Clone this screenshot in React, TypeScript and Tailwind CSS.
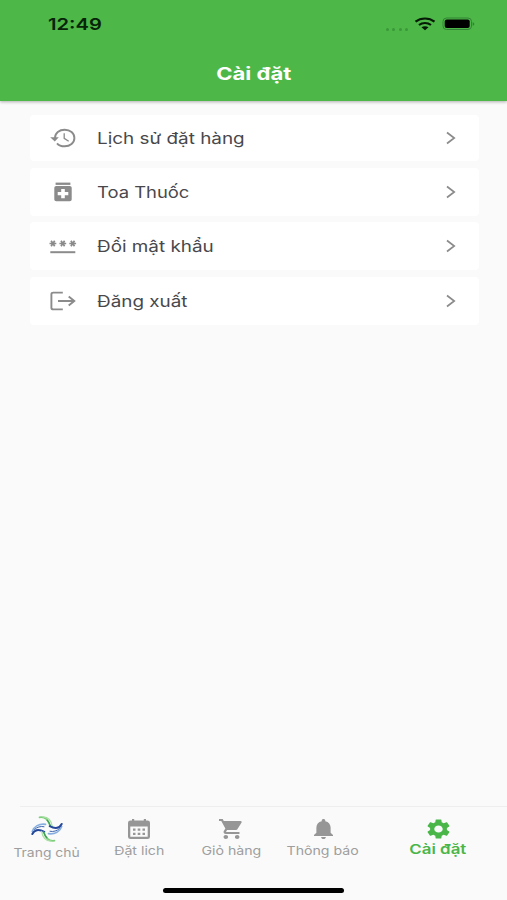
import type { ReactNode } from 'react';

const HistoryIcon = () => (
  <svg width="26" height="20" viewBox="0 0 26 20" fill="none" stroke="#8b8b8b" strokeWidth="1.9">
    <path d="M5 10.500V10C5 5 9.200 1.700 14.700 1.700S24.400 5.300 24.400 10s-4.300 8.300-9.700 8.300c-3.200 0-6-1-7.700-3" />
    <path d="M.2 9.200h8.600L4.800 13.400z" fill="#8b8b8b" stroke="none" />
    <path d="M14.200 5.300v5l4.500 3" strokeWidth="1.300" />
  </svg>
);
const MedicineIcon = () => (
  <svg width="26" height="20" viewBox="0 0 26 20" fill="#8b8b8b">
    <rect x="5.600" y=".6" width="14.800" height="2.300" />
    <path fillRule="evenodd" d="M6.300 3.900h13.400q2 0 2 1.800v11.700q0 1.800-2 1.800H6.300q-2 0-2-1.800V5.700q0-1.800 2-1.800zM11.200 7v3H7.700v3.200h3.500v3h3.600v-3h3.500V10h-3.500V7z" />
  </svg>
);
const PasswordIcon = () => (
  <svg className="-ml-[2px]" width="29" height="20" viewBox="0 0 29 20" stroke="#8b8b8b" fill="none">
    <path d="M2.300 16.200h25" strokeWidth="2" />
    {[4.9, 14.8, 24.7].map((x) => (
      <path key={x} strokeWidth="1.700" d={`M${x - 3.4} 7.500h6.800M${x - 1.8} 4.700l3.600 5.600M${x + 1.8} 4.700l-3.600 5.600`} />
    ))}
  </svg>
);
const LogoutIcon = () => (
  <svg width="26" height="20" viewBox="0 0 26 20" fill="none" stroke="#8b8b8b" strokeWidth="1.900">
    <path d="M12.800 1.600H3.300q-1.900 0-1.900 1.700v13.400q0 1.700 1.900 1.700h9.500M8 10h16M18.700 5.400l5.600 4.600-5.600 4.600" />
  </svg>
);

const Chevron = () => (
  <svg width="10" height="14" viewBox="0 0 10 14" fill="none" stroke="#8b8b8b" strokeWidth="1.700">
    <path d="M1 1.500 8.200 7 1 12.500" />
  </svg>
);

// One half of the pinwheel; the other half is the same shape turned by 180 degrees.
const LogoStrands = () => (
  <g>
    <path d="M9.500 2.300c5-.8 8.500 2.200 10.300 7.700" stroke="#7fce7c" strokeWidth="1.700" />
    <path d="M13 1.800c5.500.3 8.500 4.200 9.300 9.700" stroke="#a9dfa5" strokeWidth="1.300" />
    <path d="M17.200 5.300c1.600 1.500 2.600 3.600 3.300 5.800" stroke="#3f9f58" strokeWidth="1.400" />
    <path d="M2.300 16.500C4 11.500 9 8.500 15.500 9.300" stroke="#86afe0" strokeWidth="1.700" />
    <path d="M2.300 19c2.200-4 6-5.500 12-2.200" stroke="#23479a" strokeWidth="2" />
    <path d="M4.500 14.500C7 12 10.500 11 14 11.700" stroke="#3d64ae" strokeWidth="1" />
  </g>
);
const LogoIcon = () => (
  <svg width="34" height="28" viewBox="0 0 34 28" fill="none" strokeLinecap="round">
    <LogoStrands />
    <g transform="rotate(180 17 14)">
      <LogoStrands />
    </g>
  </svg>
);
const CalendarIcon = () => (
  <svg width="22" height="20" viewBox="0 0 22 20" fill="#969696">
    <path fillRule="evenodd" d="M2.500 1.500H4V0h2.200v1.500h9.600V0H18v1.500h1.500Q22 1.500 22 3.700v14.100Q22 20 19.500 20h-17Q0 20 0 17.800V3.700Q0 1.500 2.500 1.500zM2.300 7.500v10.200h17.400V7.500z" />
    <path d="M5 9.500h2.500v2.200H5zM9.700 9.500h2.600v2.200H9.700zM14.500 9.500H17v2.200h-2.500zM5 13.700h2.500v2.200H5zM9.700 13.700h2.600v2.200H9.700zM14.500 13.700H17v2.200h-2.500z" />
  </svg>
);
const CartIcon = () => (
  <svg width="25" height="20" viewBox="1 2 22 20" preserveAspectRatio="none" fill="#969696">
    <path d="M7 18c-1.100 0-1.990.9-1.990 2S5.900 22 7 22s2-.9 2-2-.9-2-2-2zM1 2v2h2l3.600 7.590-1.350 2.450c-.16.280-.25.610-.25.960 0 1.100.9 2 2 2h12v-2H7.420c-.14 0-.25-.11-.25-.25l.03-.12.9-1.630h7.450c.75 0 1.410-.41 1.750-1.030l3.580-6.490A1 1 0 0 0 20 4H5.210l-.94-2H1zm16 16c-1.100 0-1.990.9-1.990 2s.89 2 1.990 2 2-.9 2-2-.9-2-2-2z" />
  </svg>
);
const BellIcon = () => (
  <svg width="19" height="20" viewBox="4 2.500 16 19.500" preserveAspectRatio="none" fill="#969696">
    <path d="M12 22c1.100 0 2-.9 2-2h-4c0 1.100.89 2 2 2zm6-6v-5c0-3.070-1.640-5.640-4.500-6.320V4c0-.83-.67-1.500-1.500-1.500s-1.500.67-1.500 1.500v.68C7.630 5.360 6 7.920 6 11v5l-2 2v1h16v-1l-2-2z" />
  </svg>
);
const GearIcon = () => (
  <svg width="23" height="20" viewBox="2.200 2 19.600 20" preserveAspectRatio="none" fill="#4ab649">
    <path d="M19.140 12.940c.04-.3.060-.61.060-.94 0-.32-.02-.64-.07-.94l2.030-1.580c.18-.14.230-.41.120-.61l-1.920-3.320c-.12-.22-.37-.29-.59-.22l-2.390.96c-.5-.38-1.030-.7-1.620-.94l-.36-2.540c-.04-.24-.24-.41-.48-.41h-3.840c-.24 0-.43.17-.47.41l-.36 2.540c-.59.24-1.130.57-1.620.94l-2.390-.96c-.22-.08-.47 0-.59.22L2.740 8.870c-.12.21-.08.47.12.61l2.030 1.580c-.05.3-.09.63-.09.94s.02.64.07.94l-2.030 1.580c-.18.14-.23.41-.12.61l1.920 3.320c.12.22.37.29.59.22l2.390-.96c.5.38 1.030.7 1.620.94l.36 2.540c.05.24.24.41.48.41h3.840c.24 0 .44-.17.47-.41l.36-2.540c.59-.24 1.130-.56 1.620-.94l2.390.96c.22.08.47 0 .59-.22l1.920-3.320c.12-.22.070-.47-.12-.61l-2.010-1.580zM12 15.600c-1.980 0-3.600-1.620-3.600-3.600s1.620-3.600 3.600-3.600 3.600 1.620 3.600 3.600-1.620 3.600-3.600 3.600z" />
  </svg>
);

const rows: { icon: ReactNode; label: string; height: string; stretch: string }[] = [
  { icon: <HistoryIcon />, label: 'Lịch sử đặt hàng', height: 'h-[46px]', stretch: 'scale-x-[1.180]' },
  { icon: <MedicineIcon />, label: 'Toa Thuốc', height: 'h-12', stretch: 'scale-x-[1.150]' },
  { icon: <PasswordIcon />, label: 'Đổi mật khẩu', height: 'h-12', stretch: 'scale-x-[1.180]' },
  { icon: <LogoutIcon />, label: 'Đăng xuất', height: 'h-12', stretch: 'scale-x-[1.180]' },
];

const tabs: { icon: ReactNode; label: string }[] = [
  { icon: <CalendarIcon />, label: 'Đặt lich' },
  { icon: <CartIcon />, label: 'Giỏ hàng' },
  { icon: <BellIcon />, label: 'Thông báo' },
];

export default function App() {
  return (
    <div className="flex h-[900px] w-[507px] flex-col overflow-hidden bg-[#fafafa] font-['Inter',sans-serif]">
      <header className="h-[101px] shrink-0 bg-[#4db748] shadow-[0_1px_3px_rgba(0,0,0,0.3)]">
        <div className="flex h-12 items-center justify-between pr-8 pl-12">
          <span className="inline-block origin-left scale-x-[1.260] text-base leading-none font-semibold text-[#082408]">12:49</span>
          <div className="flex items-center">
            <div className="mt-2.5 flex gap-[3.500px]">
              {[0, 1, 2, 3].map((n) => (
                <i key={n} className="size-[3px] rounded-full bg-[#3a983a]" />
              ))}
            </div>
            <svg className="ml-1.5" width="22" height="14" viewBox="0 0 22 14" fill="none" stroke="#061806">
              <path d="M1.500 4.700c5.500-4.300 13.500-4.300 19 0M5 8c3.500-2.700 8.500-2.700 12 0" strokeWidth="2.200" />
              <path d="M7.500 10.300c2-1.500 5-1.500 7 0L11 13.300z" fill="#061806" stroke="none" />
            </svg>
            <svg className="ml-1.5" width="33" height="14" viewBox="0 0 33 14">
              <rect x="1" y="1" width="28.500" height="11.500" rx="3.500" fill="none" stroke="#328335" />
              <rect x="2.700" y="2.500" width="25" height="8.500" rx="2" fill="#000" />
              <path d="M30.700 5v4q1.700-.8 1.700-2t-1.700-2z" fill="#328335" />
            </svg>
          </div>
        </div>
        <h1 className="flex h-[52px] items-center justify-center text-[17.500px] font-bold text-white">
          <span className="inline-block scale-x-[1.260]">Cài đặt</span>
        </h1>
      </header>

      <main className="flex flex-1 flex-col gap-[6.500px] pt-[14px] pr-7 pl-[30px]">
        {rows.map((row) => (
          <button key={row.label} className={`flex shrink-0 items-center rounded-sm bg-white pr-[23px] pl-5 ${row.height}`}>
            <span className="flex w-[47px]">{row.icon}</span>
            <span className={`inline-block origin-left text-base text-[#48484c] ${row.stretch}`}>{row.label}</span>
            <span className="ml-auto"><Chevron /></span>
          </button>
        ))}
      </main>

      <nav className="flex h-[94px] shrink-0 flex-col items-center">
        <div className="ml-5 h-px w-[487px] bg-[#eeeeee]" />
        <div className="flex h-[78px] w-full text-[#9e9e9e]">
          <div className="flex w-[93px] flex-col items-center pt-2">
            <LogoIcon />
            <span className="mt-0.5 inline-block scale-x-[1.160] text-xs whitespace-nowrap">Trang chủ</span>
          </div>
          {tabs.map((tab) => (
            <div key={tab.label} className="flex w-[92px] flex-col items-center pt-3">
              {tab.icon}
              <span className="mt-1 inline-block scale-x-[1.180] text-xs whitespace-nowrap">{tab.label}</span>
            </div>
          ))}
          <div className="flex flex-1 flex-col items-center pt-3 text-[#4ab649]">
            <GearIcon />
            <span className="inline-block scale-x-[1.250] text-[13.500px] leading-5 font-semibold whitespace-nowrap">Cài đặt</span>
          </div>
        </div>
        <div className="mt-[3px] h-[5px] w-[181px] shrink-0 rounded-full bg-black" />
      </nav>
    </div>
  );
}
